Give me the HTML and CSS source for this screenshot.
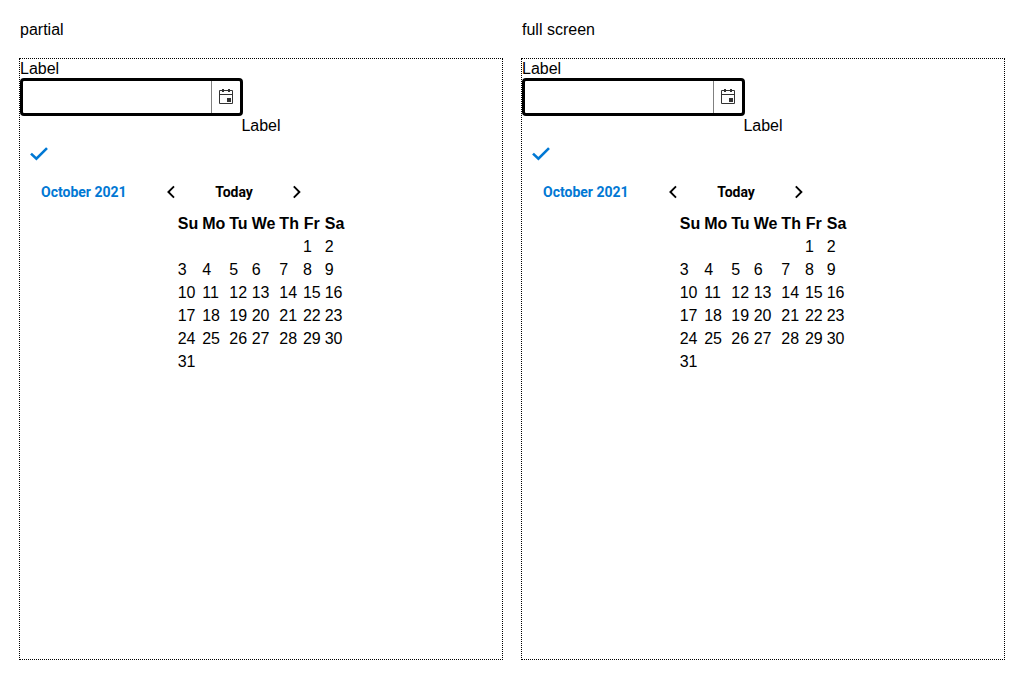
FILE: index.html
```html
<!DOCTYPE html>
<html lang="en">
<head>
<meta charset="utf-8">
<title>Date picker</title>
<link rel="stylesheet" href="styles.css">
</head>
<body>
<svg class="symbols" aria-hidden="true">
  <symbol id="calendar" viewBox="0 0 16 16"><path d="M1.5 1.5h13v13h-13zM1.5 5.5h13" fill="none" stroke="#333"/><path d="M4 0h2v3H4zM10 0h2v3h-2zM9 9h4v4H9z" fill="#333"/></symbol>
  <symbol id="check" viewBox="0 0 20 20"><path d="M2 9.6l5.4 5.1L18 4.2" fill="none" stroke="#0078d4" stroke-width="2.6"/></symbol>
  <symbol id="prev" viewBox="0 0 16 16"><path d="M11 2.4L5.4 8l5.6 5.6" fill="none" stroke="#000" stroke-width="1.9"/></symbol>
  <symbol id="next" viewBox="0 0 16 16"><path d="M4.8 2.4L10.4 8l-5.6 5.6" fill="none" stroke="#000" stroke-width="1.9"/></symbol>
</svg>
<main class="page">
  <section class="demo">
    <h2 class="title">partial</h2>
    <div class="frame">
      <label class="label" for="date-a">Label</label>
      <div class="field"><input class="input" id="date-a" type="text"><button class="open" type="button" aria-label="Open calendar"><svg class="icon"><use href="#calendar"/></svg></button></div>
      <div class="heading">Label</div>
      <button class="done" type="button" aria-label="Done"><svg class="check"><use href="#check"/></svg></button>
      <div class="nav"><button class="month" type="button">October 2021</button><button class="arrow" type="button" aria-label="Previous month"><svg class="icon"><use href="#prev"/></svg></button><button class="today" type="button">Today</button><button class="arrow" type="button" aria-label="Next month"><svg class="icon"><use href="#next"/></svg></button></div>
      <table class="days">
        <thead><tr><th>Su</th><th>Mo</th><th>Tu</th><th>We</th><th>Th</th><th>Fr</th><th>Sa</th></tr></thead>
        <tbody>
          <tr><td></td><td></td><td></td><td></td><td></td><td>1</td><td>2</td></tr>
          <tr><td>3</td><td>4</td><td>5</td><td>6</td><td>7</td><td>8</td><td>9</td></tr>
          <tr><td>10</td><td>11</td><td>12</td><td>13</td><td>14</td><td>15</td><td>16</td></tr>
          <tr><td>17</td><td>18</td><td>19</td><td>20</td><td>21</td><td>22</td><td>23</td></tr>
          <tr><td>24</td><td>25</td><td>26</td><td>27</td><td>28</td><td>29</td><td>30</td></tr>
          <tr><td>31</td><td></td><td></td><td></td><td></td><td></td><td></td></tr>
        </tbody>
      </table>
    </div>
  </section>
  <section class="demo">
    <h2 class="title">full screen</h2>
    <div class="frame">
      <label class="label" for="date-b">Label</label>
      <div class="field"><input class="input" id="date-b" type="text"><button class="open" type="button" aria-label="Open calendar"><svg class="icon"><use href="#calendar"/></svg></button></div>
      <div class="heading">Label</div>
      <button class="done" type="button" aria-label="Done"><svg class="check"><use href="#check"/></svg></button>
      <div class="nav"><button class="month" type="button">October 2021</button><button class="arrow" type="button" aria-label="Previous month"><svg class="icon"><use href="#prev"/></svg></button><button class="today" type="button">Today</button><button class="arrow" type="button" aria-label="Next month"><svg class="icon"><use href="#next"/></svg></button></div>
      <table class="days">
        <thead><tr><th>Su</th><th>Mo</th><th>Tu</th><th>We</th><th>Th</th><th>Fr</th><th>Sa</th></tr></thead>
        <tbody>
          <tr><td></td><td></td><td></td><td></td><td></td><td>1</td><td>2</td></tr>
          <tr><td>3</td><td>4</td><td>5</td><td>6</td><td>7</td><td>8</td><td>9</td></tr>
          <tr><td>10</td><td>11</td><td>12</td><td>13</td><td>14</td><td>15</td><td>16</td></tr>
          <tr><td>17</td><td>18</td><td>19</td><td>20</td><td>21</td><td>22</td><td>23</td></tr>
          <tr><td>24</td><td>25</td><td>26</td><td>27</td><td>28</td><td>29</td><td>30</td></tr>
          <tr><td>31</td><td></td><td></td><td></td><td></td><td></td><td></td></tr>
        </tbody>
      </table>
    </div>
  </section>
</main>
</body>
</html>
```
FILE: styles.css
```css
* { box-sizing: border-box; }
body { margin: 0; font: 16px/20px "Liberation Sans", Arial, sans-serif; color: #000; background: #fff; }
button { border: 0; padding: 0; background: none; color: inherit; }
.symbols { display: none; }
.page { display: grid; grid-template-columns: 1fr 1fr; gap: 18px; padding: 20px 19px 19px; }
.title { margin: 0 0 18px; padding-left: 1px; font-size: 16px; line-height: 20px; font-weight: 400; }
.frame { min-height: 602px; border: 1px dotted #000; }
.label { display: block; line-height: 19px; }
.field { display: flex; width: 223px; height: 38px; border: 3px solid #000; border-radius: 4px; }
.input { flex: 1; min-width: 0; border: 0; padding: 0 8px; font: inherit; background: none; outline: 0; }
.open { display: flex; width: 29px; align-items: center; justify-content: center; border-left: 1px solid #808080; }
.icon { display: block; width: 16px; height: 16px; }
.heading { text-align: center; }
.done { display: flex; width: 38px; height: 36px; align-items: center; justify-content: center; }
.check { display: block; width: 20px; height: 20px; }
.nav { display: flex; height: 40px; align-items: center; padding-left: 21px; }
.month, .today { font: 700 14px/20px Roboto, sans-serif; text-align: left; }
.month { width: 122px; color: #0078d4; }
.arrow { display: flex; width: 16px; height: 32px; align-items: center; }
.today { width: 110px; text-align: center; }
.days { margin: -1px auto 0; border-spacing: 2px; line-height: 19px; }
.days th, .days td { height: 21px; padding: 1px; }
.days th { text-align: center; }
.days td { text-align: left; }
```
